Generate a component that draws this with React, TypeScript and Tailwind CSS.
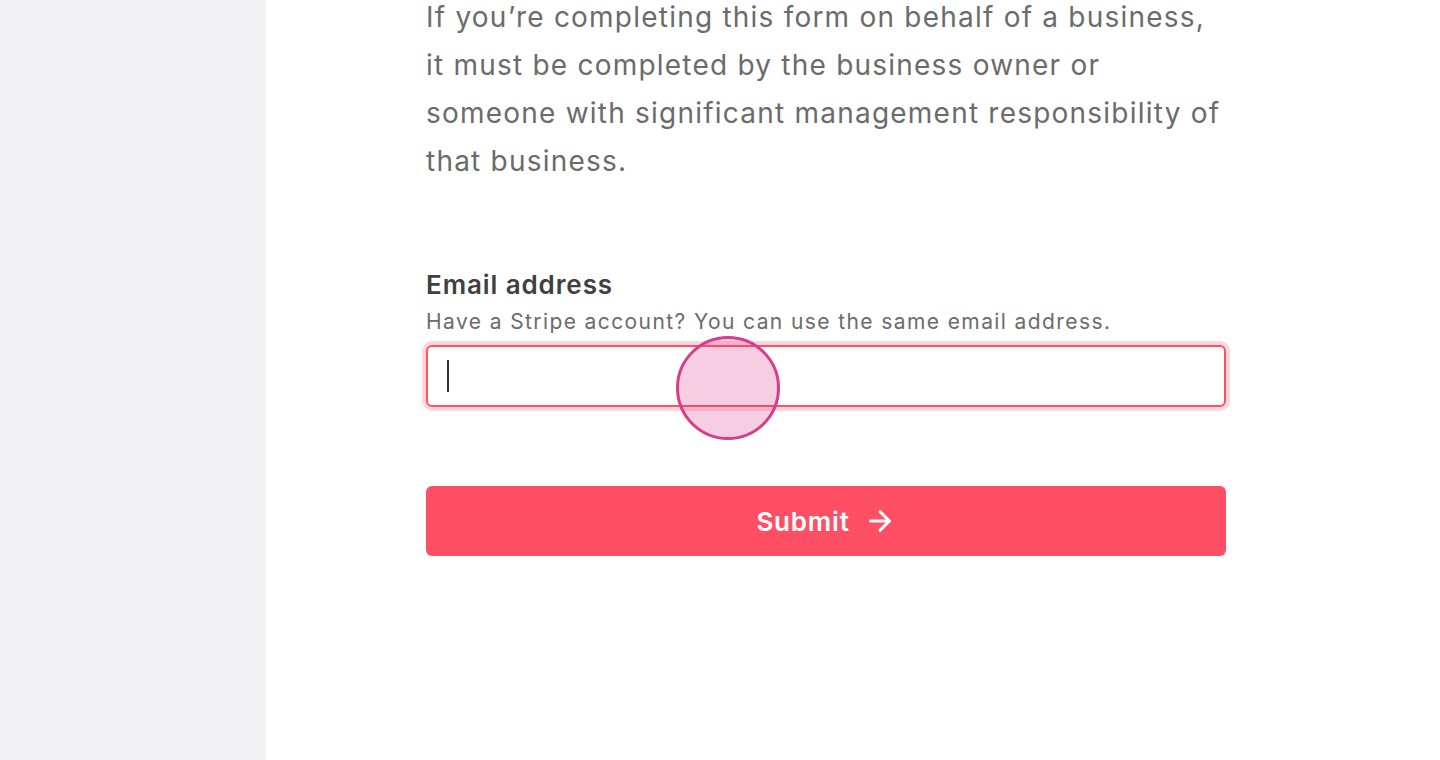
import { ArrowRight } from "lucide-react";

export default function App() {
  return (
    <div className="flex h-[760px] w-[1440px] overflow-hidden bg-white font-['Inter',sans-serif]">
      <aside className="w-[266px] shrink-0 bg-[#f2f2f5]" />
      <main className="relative flex-1 pl-[160px]">
        <div className="w-[800px]">
          <p className="-mt-[7px] text-[28px] leading-[48px] tracking-[1.22px] text-[#6b6b6b]">
            If you’re completing this form on behalf of a business,
            <br />
            it must be completed by the business owner or
            <br />
            someone with significant management responsibility of
            <br />
            that business.
          </p>

          <div className="mt-[84px]">
            <label className="block text-[26px] font-semibold leading-[32px] tracking-[0.9px] text-[#404040]">
              Email address
            </label>
            <div className="mt-[7px] text-[21px] leading-[28px] tracking-[1.4px] text-[#6b6b6b]">
              Have a Stripe account? You can use the same email address.
            </div>
            <div className="mt-[9px] flex h-[62px] items-center rounded-[6px] border-2 border-[#ff5068] bg-white px-[19px] shadow-[0_0_0_4px_#ffd7db]">
              <span className="h-[32px] w-[2px] bg-[#333]" />
            </div>
          </div>

          <button className="mt-[79px] flex h-[70px] w-full items-center justify-center gap-[14px] rounded-[6px] bg-[#ff4f64] text-[26px] font-semibold tracking-[0.8px] text-white">
            Submit
            <ArrowRight size={32} strokeWidth={2.3} />
          </button>
        </div>

        {/* touch indicator */}
        <div className="absolute left-[410px] top-[336px] h-[104px] w-[104px] rounded-full border-[3px] border-[#d63d8a] bg-[#d63d8a]/25" />
      </main>
    </div>
  );
}
